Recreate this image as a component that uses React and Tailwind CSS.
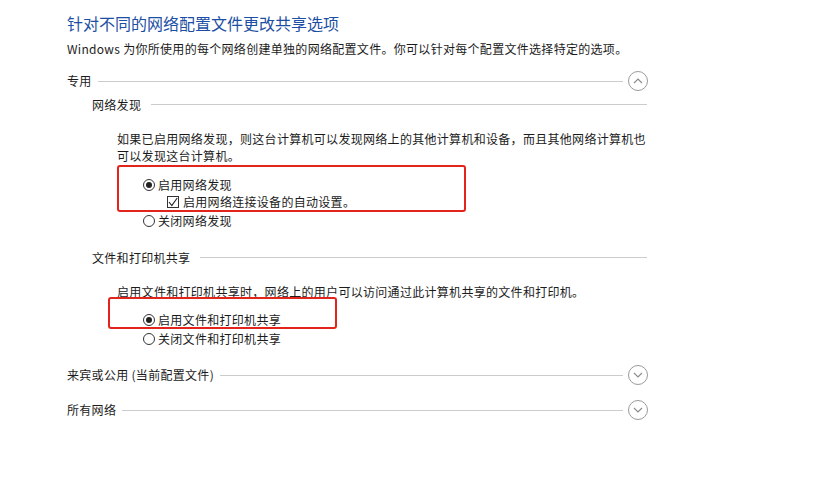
import React from "react"

const FONT = { fontFamily: '"Noto Sans CJK SC", "Noto Sans", sans-serif' }

function Chevron({ up }) {
  return (
    <div className="w-[20px] h-[20px] rounded-full border border-[#9a9a9a] flex items-center justify-center shrink-0 ml-[5px]">
      <svg width="10" height="6" viewBox="0 0 10 6" fill="none">
        <path d={up ? "M1 5 L5 1 L9 5" : "M1 1 L5 5 L9 1"} stroke="#8a8a8a" strokeWidth="1.1" />
      </svg>
    </div>
  )
}

function Radio({ checked, label, className = "" }) {
  return (
    <div className={`flex items-center h-[18px] pl-[76px] ${className}`}>
      <span className="w-[12px] h-[12px] rounded-full border border-[#333] bg-white flex items-center justify-center shrink-0">
        {checked && <span className="w-[6px] h-[6px] rounded-full bg-[#222]" />}
      </span>
      <span className="ml-[3px] leading-[18px]">{label}</span>
    </div>
  )
}

function SectionHeader({ label, up, className = "" }) {
  return (
    <div className={`flex items-center h-[20px] ${className}`}>
      <span className="leading-[20px]">{label}</span>
      <div className="flex-1 h-px bg-[#cccccc] ml-[6px]" />
      <Chevron up={up} />
    </div>
  )
}

function SubHeader({ label, className = "" }) {
  return (
    <div className={`flex items-center h-[17px] pl-[25px] pr-px ${className}`}>
      <span className="leading-[17px]">{label}</span>
      <div className="flex-1 h-px bg-[#cccccc] ml-[10px]" />
    </div>
  )
}

export default function App() {
  return (
    <div className="relative w-[823px] h-[477px] bg-white overflow-hidden text-[#1b1b1b]" style={FONT}>
      <div className="w-[648px] pl-[67px] text-[12px] tracking-[0.3px]">
        <h1 className="mt-[13px] text-[16px] tracking-normal leading-[20px] text-[#1c4fa3] font-normal">
          针对不同的网络配置文件更改共享选项
        </h1>
        <p className="mt-[7px] leading-[17px]">
          Windows 为你所使用的每个网络创建单独的网络配置文件。你可以针对每个配置文件选择特定的选项。
        </p>

        <SectionHeader label="专用" up className="mt-[14px]" />
        <SubHeader label="网络发现" className="mt-[5px]" />
        <p className="mt-[17px] pl-[50px] leading-[17px]">
          如果已启用网络发现，则这台计算机可以发现网络上的其他计算机和设备，而且其他网络计算机也可以发现这台计算机。
        </p>
        <Radio checked label="启用网络发现" className="mt-[12px]" />
        <div className="flex items-center h-[16px] pl-[100px]">
          <span className="w-[12px] h-[12px] border border-[#333] bg-white flex items-center justify-center shrink-0">
            <svg width="10" height="10" viewBox="0 0 10 10" fill="none">
              <path d="M1 5 L3.8 8.5 L9.2 1" stroke="#222" strokeWidth="1.1" />
            </svg>
          </span>
          <span className="ml-[4px] leading-[16px]">启用网络连接设备的自动设置。</span>
        </div>
        <Radio label="关闭网络发现" className="mt-[2px]" />

        <SubHeader label="文件和打印机共享" className="mt-[19px]" />
        <p className="mt-[17px] pl-[50px] leading-[17px]">
          启用文件和打印机共享时，网络上的用户可以访问通过此计算机共享的文件和打印机。
        </p>
        <Radio checked label="启用文件和打印机共享" className="mt-[11px]" />
        <Radio label="关闭文件和打印机共享" className="mt-[1px]" />

        <SectionHeader label="来宾或公用 (当前配置文件)" className="mt-[17px]" />
        <SectionHeader label="所有网络" className="mt-[15px]" />
      </div>

      {/* annotation boxes */}
      <div className="absolute left-[117px] top-[165px] w-[349px] h-[47px] border-[2.5px] border-[#e3241d] rounded-[3px]" />
      <div className="absolute left-[108px] top-[297px] w-[229px] h-[32px] border-[2.5px] border-[#e3241d] rounded-[3px]" />
    </div>
  )
}
